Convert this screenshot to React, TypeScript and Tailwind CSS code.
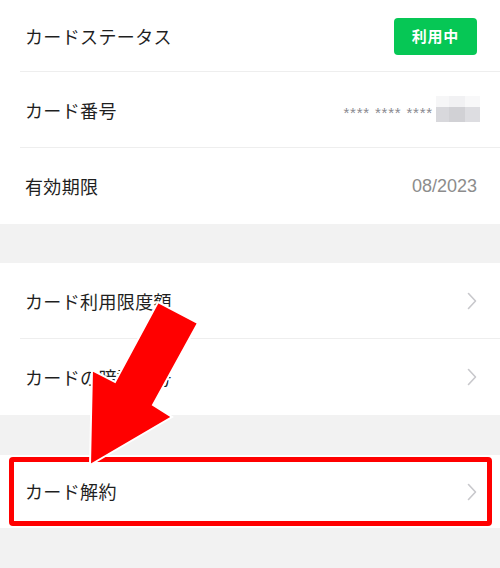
import React from "react"

const font = { fontFamily: '"Noto Sans CJK JP", "Noto Sans", sans-serif' }

function Chevron() {
    return (
        <svg width="10" height="18" viewBox="0 0 10 18" fill="none" className="shrink-0">
            <path d="M1.5 1.5 L8.5 9 L1.5 16.5" stroke="#c8c8cc" strokeWidth="1.6" strokeLinecap="round" strokeLinejoin="round" />
        </svg>
    )
}

function Row({ label, children, height = "h-[76px]", divider = false }: { label: string; children?: React.ReactNode; height?: string; divider?: boolean }) {
    return (
        <div className={`relative flex items-center justify-between pl-[25px] pr-[23px] bg-white ${height}`}>
            <span className="text-[18px] text-[#1f1f1f] tracking-[0.02em]">{label}</span>
            {children}
            {divider && <div className="absolute left-[20px] right-0 bottom-0 h-px bg-[#eeeeee]" />}
        </div>
    )
}

export default function App() {
    return (
        <div className="relative w-[500px] h-[568px] overflow-hidden bg-[#f2f2f2]" style={font}>
            {/* card info */}
            <div className="bg-white">
                <Row label="カードステータス" height="h-[72px]" divider>
                    <div className="w-[83px] h-[37px] rounded-[4px] bg-[#06c755] flex items-center justify-center text-white text-[15px] font-bold tracking-[0.05em]">
                        利用中
                    </div>
                </Row>
                <Row label="カード番号" divider>
                    <div className="flex items-center gap-[3px] mr-[-3px]">
                        <span className="text-[15px] leading-none text-[#8a8a90] tracking-[0.8px] font-['Liberation_Sans',sans-serif] mt-[4px]">**** **** ****</span>
                        <div className="grid grid-cols-[13px_16px_15px] grid-rows-[11px_15px] mt-[-2px]">
                            <div className="bg-[#f6f6f7]" />
                            <div className="bg-[#f1f1f3]" />
                            <div className="bg-[#f8f8f9]" />
                            <div className="bg-[#d8d8dc]" />
                            <div className="bg-[#d1d1d5]" />
                            <div className="bg-[#dddde1]" />
                        </div>
                    </div>
                </Row>
                <Row label="有効期限">
                    <span className="text-[18px] text-[#8c8c8c] font-['Liberation_Sans',sans-serif]">08/2023</span>
                </Row>
            </div>

            <div className="h-[39px]" />

            <div className="bg-white">
                <Row label="カード利用限度額" divider>
                    <Chevron />
                </Row>
                <Row label="カードの暗証番号">
                    <Chevron />
                </Row>
            </div>

            <div className="h-[40px]" />

            <div className="relative bg-white">
                <Row label="カード解約" height="h-[73px]">
                    <Chevron />
                </Row>
                <div className="absolute left-[9px] right-[8px] top-[2px] bottom-[2px] border-[5px] border-[#ff0000] rounded-[4px]" />
            </div>

            {/* annotation arrow */}
            <svg className="absolute left-0 top-0" width="500" height="568" viewBox="0 0 500 568">
                <polygon
                    points="158,302 198,323 153,405 172,417 90,465 92,370 115,382"
                    fill="#ff0000"
                    stroke="#ffffff"
                    strokeWidth="2"
                    strokeLinejoin="miter"
                />
            </svg>
        </div>
    )
}
